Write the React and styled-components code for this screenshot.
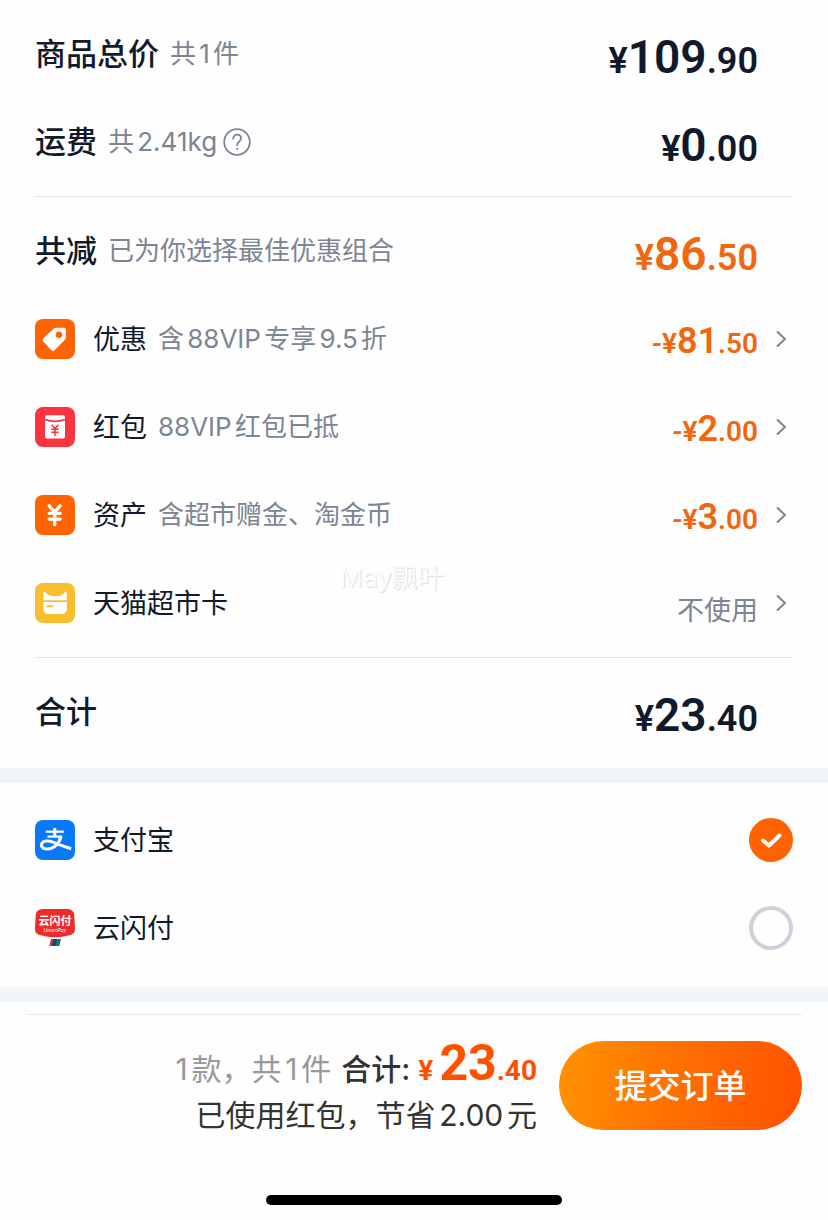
import React, { useState } from 'react'
import styled, { createGlobalStyle } from 'styled-components'

const GlobalStyle = createGlobalStyle`
    * {
        box-sizing: border-box;
    }
    body {
        margin: 0;
        background-color: #fefefe;
        color: #111a2c;
        font-family: Inter, "Noto Sans CJK SC", sans-serif;
        text-autospace: normal;
    }
    button {
        font: inherit;
        color: inherit;
        border: none;
        background: none;
        padding: 0;
        cursor: pointer;
    }
`
const Page = styled.main`
    display: flex;
    flex-direction: column;
`
const Section = styled.section`
    position: relative;
    padding: 10px 35px 12px;
    border-bottom: 15px solid #f2f5f8;
`
const PaySection = styled.fieldset`
    margin: 0;
    padding: 13px 35px 15px;
    border: none;
    border-bottom: 15px solid #f2f5f8;
`
const Divider = styled.hr`
    height: 1px;
    margin: 10px 0px;
    border: none;
    background-color: #e6e8eb;
`
const Row = styled.div`
    display: flex;
    align-items: center;
    width: 100%;
    height: 88px;
    text-align: left;
`
const Title = styled.span`
    font-size: 31px;
    line-height: 40px;
    font-weight: 500;
`
const Name = styled.span`
    margin-left: 18px;
    padding-top: 2px;
    font-size: 27px;
    line-height: 40px;
`
const Note = styled.span`
    margin-left: 11px;
    font-size: 26px;
    line-height: 40px;
    color: #7c8593;
`
const HelpButton = styled.button`
    display: flex;
    margin-left: 6px;
`
const Amount = styled.span`
    margin-left: auto;
    padding: ${props => props.$small ? '6px' : '10px'} 35px 0px 0px;
    font-family: Roboto, sans-serif;
    font-weight: 600;
    font-size: ${props => props.$small ? '28px' : '36px'};
    line-height: 44px;
    color: ${props => props.$orange ? '#f2660f' : '#111a2c'};
`
const Whole = styled.span`
    font-size: ${props => props.$small ? '36px' : '46px'};
`
const Unused = styled.span`
    margin-left: auto;
    padding-top: 16px;
    font-size: 27px;
    line-height: 40px;
    color: #7c8593;
`
const Arrow = styled.svg`
    width: 12px;
    height: 20px;
    margin: 0px 6px 0px 17px;
    fill: none;
    stroke: #7c8593;
    stroke-width: 2;
`
const AmountGroup = styled.span`
    display: flex;
    align-items: center;
    margin-left: auto;

    ${Amount} {
        padding-right: 0px;
    }
`
const Watermark = styled.span`
    position: absolute;
    top: 558px;
    left: 41%;
    font-size: 26px;
    line-height: 40px;
    color: #fcfcfc;
    text-shadow: 1px 1px 1px #dcdcdc;
    text-autospace: no-autospace;
    pointer-events: none;
`
const RadioBox = styled.span`
    position: relative;
    display: flex;
    margin-left: auto;

    svg {
        position: absolute;
        inset: 0;
        pointer-events: none;
    }
`
const Radio = styled.input`
    appearance: none;
    width: 44px;
    height: 44px;
    margin: 0;
    border: 4px solid #cdd1d9;
    border-radius: 50%;
    cursor: pointer;

    &:checked {
        border-color: #ff6200;
        background-color: #ff6200;
    }
`
const Footer = styled.footer`
    display: flex;
    align-items: flex-start;
    justify-content: flex-end;
    margin: 12px 26px 0px;
    padding-top: 26px;
    border-top: 1px solid #ebebeb;
`
const Summary = styled.div`
    margin-right: 22px;
    text-align: right;
    color: #333333;
`
const SummaryLine = styled.div`
    font-size: 30px;
    line-height: 44px;
    white-space: nowrap;
`
const Count = styled.span`
    color: #999999;
`
const TotalLabel = styled.span`
    margin-left: 10px;
    font-weight: 500;
`
const TotalPrice = styled.span`
    margin-left: 8px;
    font-family: Roboto, sans-serif;
    font-size: 28px;
    font-weight: 700;
    color: #ff5000;
`
const TotalWhole = styled.span`
    margin-left: 6px;
    font-size: 50px;
`
const SubmitButton = styled.button`
    && {
        width: 243px;
        height: 89px;
        padding-bottom: 4px;
        border-radius: 45px;
        background: linear-gradient(100deg, #ff9300 0%, #ff7200 45%, #ff5000 100%);
        color: white;
        font-size: 33px;
        font-weight: 500;
    }
`
const HomeBar = styled.div`
    width: 296px;
    height: 10px;
    margin: 58px auto 14px;
    border-radius: 5px;
    background-color: black;
`

const TagIcon = () => (
    <svg width="40" height="40" viewBox="0 0 40 40" aria-hidden="true">
        <rect width="40" height="40" rx="8" fill="#ff6400" />
        <path d="M8.300 19.200 19 9.600q1-.8 2.200-.8h7.400q2.300 0 2.300 2.300v7.300q0 1.200-.8 2.100L19.600 31.300q-1.400 1.500-2.900.1l-8.500-9q-1.400-1.700.1-3.200Z" fill="white" />
        <circle cx="24" cy="15.800" r="3.200" fill="#ff6400" />
    </svg>
)
const PacketIcon = () => (
    <svg width="40" height="40" viewBox="0 0 40 40" aria-hidden="true">
        <rect width="40" height="40" rx="8" fill="#fa3340" />
        <path d="M12 8.200h16q2 0 2 2v1.500q-10 3.500-20 0v-1.500q0-2 2-2Z" fill="white" />
        <path d="M10 13.400q10 3.500 20 0V29.500q0 2-2 2H12q-2 0-2-2Z" fill="white" />
        <path d="m16.700 17.800 3.300 4 3.300-4M20 21.800v7M16.300 22.200h7.400M16.300 25.300h7.400" fill="none" stroke="#fa3340" strokeWidth="1.600" />
    </svg>
)
const YuanIcon = () => (
    <svg width="40" height="40" viewBox="0 0 40 40" aria-hidden="true">
        <rect width="40" height="40" rx="8" fill="#ff6400" />
        <path d="m14.300 10.800 5.400 6.400 5.400-6.400M19.700 17.500v12M14.200 18.400h11M14.200 24.100h11" fill="none" stroke="white" strokeWidth="3.400" strokeLinecap="round" />
    </svg>
)
const CardIcon = () => (
    <svg width="40" height="40" viewBox="0 0 40 40" aria-hidden="true">
        <rect width="40" height="40" rx="8" fill="#f9be2e" />
        <path d="M8.300 17.200V10.200q0-2.200 1.800-1l4 3.100q1 .7 2.200.7h7.600q1.200 0 2.200-.7l4-3.100q1.800-1.200 1.800 1v7Z" fill="white" />
        <path d="M8.300 18.900h23.600v6.300q0 5.800-5.500 5.800H13.800q-5.500 0-5.500-5.800Z" fill="white" />
        <path d="M12.500 23.200h5" stroke="#f9be2e" strokeWidth="2" strokeLinecap="round" />
    </svg>
)
const AlipayIcon = () => (
    <svg width="40" height="40" viewBox="0 0 40 40" aria-hidden="true">
        <rect width="40" height="40" rx="8" fill="#0a78fa" />
        <g fill="none" stroke="white">
            <path d="M10.800 11.700h18" strokeWidth="2.200" />
            <path d="M19.800 8v9" strokeWidth="3" />
            <path d="M12.500 16.600h14.500" strokeWidth="2.200" />
            <path d="M26.200 16C24 24.200 18.200 29 12.300 29c-4.800 0-6.700-3-5.400-5.600 1.400-2.700 6-3.200 11-1.300 5.500 2.100 10.500 4.600 18.300 6.700" strokeWidth="3" />
        </g>
    </svg>
)
const UnionPayIcon = () => (
    <svg width="40" height="40" viewBox="0 0 40 40" aria-hidden="true">
        <path d="M8 1h24q7 0 7.300 6.500L40 20q.3 6.200-5.500 7.300Q20 31 5.500 27.300-.3 26.200 0 20L.7 7.500Q1 1 8 1Z" fill="#ee2a2b" />
        <text x="20" y="17" textAnchor="middle" fontSize="11" fontWeight="700" fill="white">云闪付</text>
        <text x="20" y="24" textAnchor="middle" fontSize="5" fontStyle="italic" fill="white">UnionPay</text>
        <path d="M16 31h4l-1.700 7h-4Z" fill="#d2314a" />
        <path d="M18.500 31h4.500l-1.700 7h-4.500Z" fill="#1c4577" />
        <path d="M22 31h4l-1.700 7h-4Z" fill="#0a7a7b" />
    </svg>
)
const HelpIcon = () => (
    <svg width="28" height="28" viewBox="0 0 28 28" fill="none" stroke="#7c8593" strokeWidth="1.800" strokeLinecap="round" aria-hidden="true">
        <circle cx="14" cy="14" r="12.800" />
        <path d="M10.200 10.800c0-2.600 1.600-4.100 3.900-4.100s3.900 1.500 3.900 3.700c0 3.200-3.900 3.400-3.900 6.700" />
        <circle cx="14.100" cy="20.800" r=".6" fill="#7c8593" strokeWidth="1" />
    </svg>
)

const Price = ({ value, small, orange, minus }) => {
    const [whole, cents] = value.split('.')
    return (
        <Amount $small={small} $orange={orange}>
            {minus && '-'}¥<Whole $small={small}>{whole}</Whole>.{cents}
        </Amount>
    )
}

const discounts = [
    { name: '优惠', note: '含88VIP专享9.5折', value: '81.50', Icon: TagIcon },
    { name: '红包', note: '88VIP红包已抵', value: '2.00', Icon: PacketIcon },
    { name: '资产', note: '含超市赠金、淘金币', value: '3.00', Icon: YuanIcon },
    { name: '天猫超市卡', Icon: CardIcon },
]

const payments = [
    { id: 'alipay', name: '支付宝', Icon: AlipayIcon },
    { id: 'unionpay', name: '云闪付', Icon: UnionPayIcon },
]

export default function App() {
    const [pay, setPay] = useState('alipay')

    return (
        <>
            <GlobalStyle />
            <Page>
                <Section>
                    <Row>
                        <Title>商品总价</Title>
                        <Note>共1件</Note>
                        <Price value="109.90" />
                    </Row>
                    <Row>
                        <Title>运费</Title>
                        <Note>共2.41kg</Note>
                        <HelpButton type="button" aria-label="运费说明"><HelpIcon /></HelpButton>
                        <Price value="0.00" />
                    </Row>
                    <Divider />
                    <Row>
                        <Title>共减</Title>
                        <Note>已为你选择最佳优惠组合</Note>
                        <Price value="86.50" orange />
                    </Row>
                    {discounts.map(({ name, note, value, Icon }) => (
                        <Row as="button" type="button" key={name}>
                            <Icon />
                            <Name>{name}</Name>
                            {note && <Note>{note}</Note>}
                            <AmountGroup>
                                {value ? <Price value={value} small orange minus /> : <Unused>不使用</Unused>}
                                <Arrow viewBox="0 0 12 20" aria-hidden="true">
                                    <path d="m2 2.500 8 7.500-8 7.500" />
                                </Arrow>
                            </AmountGroup>
                        </Row>
                    ))}
                    <Divider />
                    <Row>
                        <Title>合计</Title>
                        <Price value="23.40" />
                    </Row>
                    <Watermark>May飘叶</Watermark>
                </Section>
                <PaySection>
                    {payments.map(({ id, name, Icon }) => (
                        <Row as="label" htmlFor={id} key={id}>
                            <Icon />
                            <Name>{name}</Name>
                            <RadioBox>
                                <Radio type="radio" name="pay" id={id} checked={pay === id} onChange={() => setPay(id)} />
                                {pay === id && (
                                    <svg viewBox="0 0 44 44" fill="none" stroke="white" strokeWidth="4" strokeLinecap="round" strokeLinejoin="round" aria-hidden="true">
                                        <path d="m14 22.500 6 5 10.500-10" />
                                    </svg>
                                )}
                            </RadioBox>
                        </Row>
                    ))}
                </PaySection>
                <Footer>
                    <Summary>
                        <SummaryLine>
                            <Count>1款，共1件</Count>
                            <TotalLabel>合计:</TotalLabel>
                            <TotalPrice>¥<TotalWhole>23</TotalWhole>.40</TotalPrice>
                        </SummaryLine>
                        <SummaryLine>已使用红包，节省2.00元</SummaryLine>
                    </Summary>
                    <SubmitButton type="button">提交订单</SubmitButton>
                </Footer>
                <HomeBar />
            </Page>
        </>
    )
}
